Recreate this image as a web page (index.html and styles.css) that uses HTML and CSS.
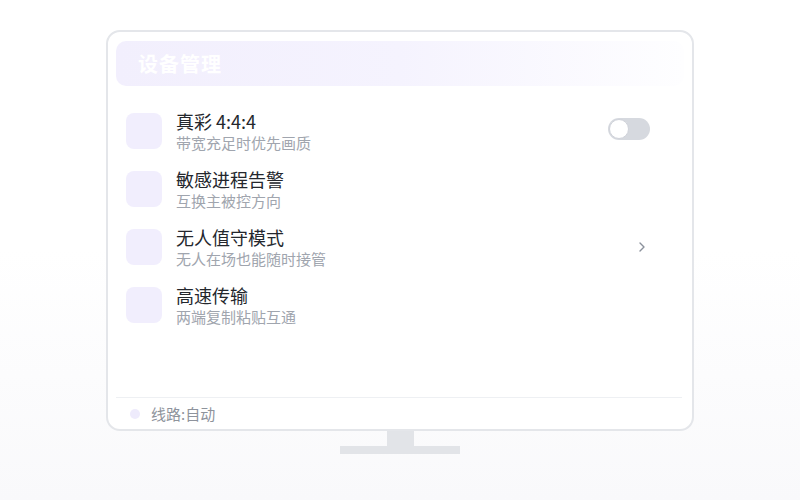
FILE: index.html
```html
<!DOCTYPE HTML>
<html>
    <head>
        <meta charset="utf-8">
        <link rel="stylesheet" href="styles.css">
    </head>

    <body>
        <div class="screen">
            <div class="monitor">
                <div class="header">
                    <h1 class="title">设备管理</h1>
                </div>

                <ul class="list">
                    <li class="row">
                        <span class="icon"></span>
                        <div class="text">
                            <p class="name">真彩 4:4:4</p>
                            <p class="desc">带宽充足时优先画质</p>
                        </div>
                        <span class="toggle"><span class="knob"></span></span>
                    </li>
                    <li class="row">
                        <span class="icon"></span>
                        <div class="text">
                            <p class="name">敏感进程告警</p>
                            <p class="desc">互换主被控方向</p>
                        </div>
                    </li>
                    <li class="row">
                        <span class="icon"></span>
                        <div class="text">
                            <p class="name">无人值守模式</p>
                            <p class="desc">无人在场也能随时接管</p>
                        </div>
                        <svg class="chevron" width="8" height="12" viewBox="0 0 8 12">
                            <path d="M2 2 L6 6 L2 10" fill="none" stroke="#8b919c" stroke-width="1.4" stroke-linecap="round" stroke-linejoin="round"/>
                        </svg>
                    </li>
                    <li class="row">
                        <span class="icon"></span>
                        <div class="text">
                            <p class="name">高速传输</p>
                            <p class="desc">两端复制粘贴互通</p>
                        </div>
                    </li>
                </ul>

                <div class="footer">
                    <span class="dot"></span>
                    <span class="route">线路:自动</span>
                </div>
            </div>
            <div class="neck"></div>
            <div class="base"></div>
        </div>
    </body>
</html>
```

FILE: styles.css
```css
* {
    margin: 0;
    padding: 0;
    box-sizing: border-box;
}

html, body {
    width: 100%;
    height: 100%;
}

body {
    font-family: "Noto Sans CJK SC", "Noto Sans", sans-serif;
    background: linear-gradient(to bottom, #ffffff 0%, #ffffff 50%, #f9f9fb 100%);
}

.screen {
    display: flex;
    flex-direction: column;
    align-items: center;
    padding-top: 30px;
}

.monitor {
    width: 588px;
    height: 401px;
    border: 2px solid #e4e6ea;
    border-radius: 14px;
    background-color: #fff;
    padding: 9px 8px 0;
    display: flex;
    flex-direction: column;
}

.header {
    height: 45px;
    border-radius: 10px;
    background: linear-gradient(to right, #f2effd 0%, #f5f3fe 50%, #fefeff 100%);
    display: flex;
    align-items: center;
    padding-left: 22px;
}

.title {
    font-size: 20px;
    font-weight: 700;
    color: #fff;
    letter-spacing: 1px;
}

.list {
    list-style: none;
    margin-top: 16px;
    flex: 1;
}

.row {
    height: 58px;
    display: flex;
    align-items: center;
    padding: 0 34px 0 10px;
}

.icon {
    width: 36px;
    height: 36px;
    border-radius: 8px;
    background-color: #f1eefd;
    flex-shrink: 0;
}

.text {
    flex: 1;
    margin-left: 14px;
}

.name {
    font-size: 18px;
    line-height: 22px;
    color: #24272d;
}

.desc {
    font-size: 15px;
    line-height: 21px;
    color: #a0a5ae;
}

.toggle {
    width: 42px;
    height: 22px;
    border-radius: 11px;
    background-color: #d6d9df;
    padding: 1px;
    display: flex;
    margin-top: -4px;
}

.knob {
    width: 20px;
    height: 20px;
    border-radius: 50%;
    background-color: #fff;
    border: 1px solid #d0d3da;
}

.chevron {
    margin-right: 4px;
}

.footer {
    height: 32px;
    border-top: 1px solid #eef0f3;
    display: flex;
    align-items: center;
    padding-left: 14px;
    margin-right: 2px;
}

.dot {
    width: 10px;
    height: 10px;
    border-radius: 50%;
    background-color: #eeebfc;
}

.route {
    font-size: 15px;
    color: #8e939c;
    margin-left: 11px;
}

.neck {
    width: 27px;
    height: 15px;
    background-color: #e2e4e8;
}

.base {
    width: 120px;
    height: 8px;
    background-color: #e2e4e8;
}
```
